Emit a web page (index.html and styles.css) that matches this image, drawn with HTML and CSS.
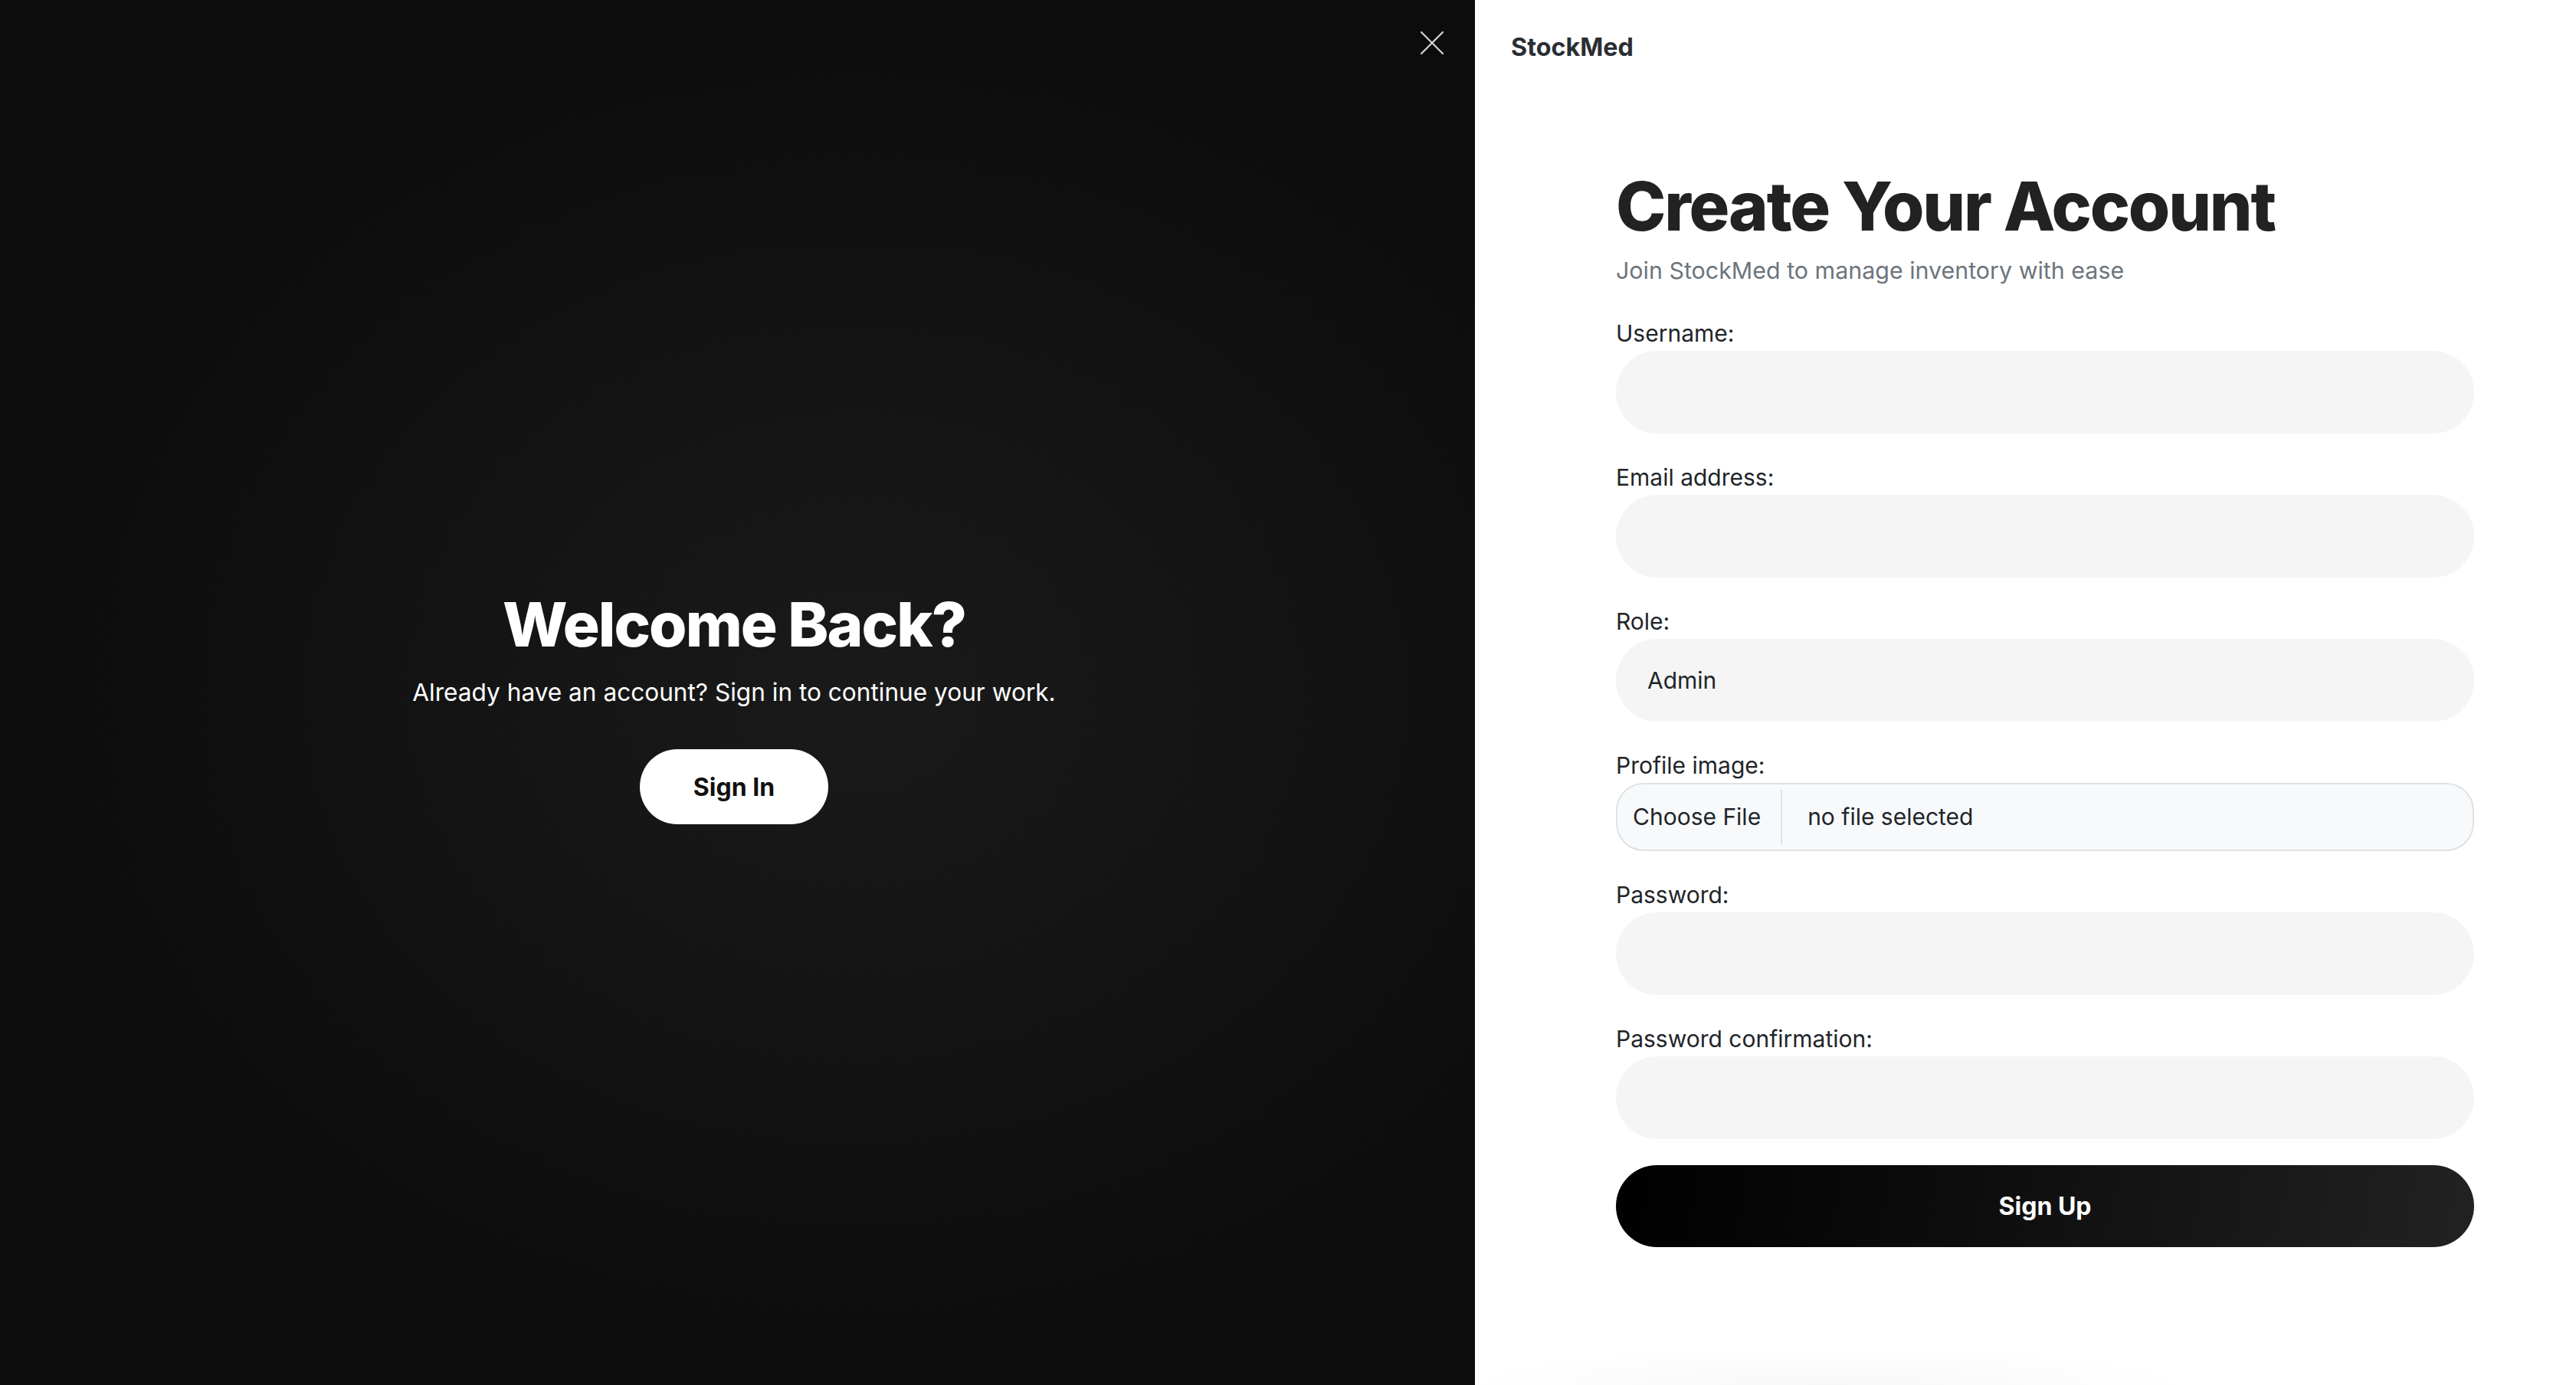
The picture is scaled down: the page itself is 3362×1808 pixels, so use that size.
FILE: index.html
```html
<!DOCTYPE html>
<html lang="en">
<head>
<meta charset="utf-8">
<title>StockMed - Sign Up</title>
<link rel="stylesheet" href="styles.css">
</head>
<body>
<div class="page">
  <section class="left">
    <button class="close" aria-label="Close">
      <svg viewBox="0 0 30 30" width="30" height="30"><path d="M1 1 L29 29 M29 1 L1 29" stroke="#d4d4d4" stroke-width="2.2" fill="none" stroke-linecap="square"/></svg>
    </button>
    <div class="welcome">
      <h2 class="welcome-title">Welcome Back?</h2>
      <p class="welcome-text">Already have an account? Sign in to continue your work.</p>
      <button class="btn-signin">Sign In</button>
    </div>
  </section>
  <section class="right">
    <div class="brand">StockMed</div>
    <form class="form">
      <h1 class="title">Create Your Account</h1>
      <p class="subtitle">Join StockMed to manage inventory with ease</p>
      <div class="group">
        <label class="label">Username:</label>
        <input class="field" type="text">
      </div>
      <div class="group">
        <label class="label">Email address:</label>
        <input class="field" type="email">
      </div>
      <div class="group">
        <label class="label">Role:</label>
        <select class="field select"><option>Admin</option></select>
      </div>
      <div class="group">
        <label class="label">Profile image:</label>
        <div class="file">
          <span class="file-btn">Choose File</span>
          <span class="file-name">no file selected</span>
        </div>
      </div>
      <div class="group">
        <label class="label">Password:</label>
        <input class="field" type="password">
      </div>
      <div class="group">
        <label class="label">Password confirmation:</label>
        <input class="field" type="password">
      </div>
      <button class="btn-signup" type="button">Sign Up</button>
    </form>
  </section>
</div>
</body>
</html>
```

FILE: styles.css
```css
* { box-sizing: border-box; }
html, body { margin: 0; padding: 0; }
body {
  font-family: Inter, "Noto Sans", "Liberation Sans", sans-serif;
  background: #fff;
  overflow: hidden;
}
.page {
  display: flex;
  width: 3362px;
  height: 1808px;
}
.left {
  flex: 0 0 1925px;
  position: relative;
  background: radial-gradient(ellipse 1100px 900px at 58% 50%, #1a1a1a 0%, #141414 45%, #0c0c0c 100%);
  display: flex;
  align-items: center;
  justify-content: center;
  padding: 35px 9px 0 0;
}
.close {
  position: absolute;
  top: 41px;
  right: 41px;
  width: 30px;
  height: 30px;
  padding: 0;
  border: 0;
  background: transparent;
  display: block;
}
.close svg { display: block; }
.welcome {
  display: flex;
  flex-direction: column;
  align-items: center;
  text-align: center;
  color: #fff;
}
.welcome-title {
  margin: 0;
  font-size: 80px;
  line-height: 1.2;
  font-weight: 800;
  letter-spacing: -0.025em;
}
.welcome-text {
  margin: 17px 0 0;
  font-size: 31.6px;
  line-height: 1.5;
  font-weight: 400;
}
.btn-signin {
  margin-top: 51px;
  height: 98px;
  padding: 0 70px;
  border: 0;
  border-radius: 49px;
  background: #fff;
  color: #111;
  font-family: inherit;
  font-size: 32px;
  font-weight: 700;
}
.right {
  flex: 1;
  position: relative;
  background: #fff radial-gradient(ellipse 480px 50px at 461px 100%, rgba(0,0,0,0.03), rgba(0,0,0,0) 100%);
}
.brand {
  margin: 42px 0 0 47px;
  font-size: 32.3px;
  line-height: 40px;
  font-weight: 700;
  color: #2b2e34;
}
.form {
  width: 1120px;
  margin: 135px 0 0 184px;
}
.title {
  margin: 0;
  font-size: 88px;
  line-height: 1.2;
  font-weight: 800;
  letter-spacing: -0.025em;
  color: #222;
}
.subtitle {
  margin: 8px 0 36px;
  font-size: 30.4px;
  line-height: 45px;
  color: #6c757d;
}
.group { margin-bottom: 34px; }
.label {
  display: block;
  font-size: 30px;
  line-height: 46px;
  color: #212529;
}
.field {
  display: block;
  width: 100%;
  height: 108px;
  border: 0;
  border-radius: 54px;
  background: #f5f5f5;
  padding: 0 41px;
  font-family: inherit;
  font-size: 30px;
  color: #212529;
  outline: none;
}
.select {
  appearance: none;
  -webkit-appearance: none;
}
.file {
  display: flex;
  align-items: center;
  height: 89px;
  border: 2px solid #dee2e6;
  border-radius: 36px;
  background: #f8f9fa;
  font-size: 30px;
  color: #212529;
}
.file-btn {
  align-self: stretch;
  display: flex;
  align-items: center;
  margin: 7px 0;
  padding: 0 26px 0 20px;
  border-right: 2px solid #dee2e6;
}
.file-name { padding-left: 33px; }
.btn-signup {
  display: block;
  width: 100%;
  height: 107px;
  margin-top: 0;
  border: 0;
  border-radius: 54px;
  background: linear-gradient(100deg, #000 0%, #101010 50%, #222 100%);
  color: #fff;
  font-family: inherit;
  font-size: 32px;
  font-weight: 700;
}
```
